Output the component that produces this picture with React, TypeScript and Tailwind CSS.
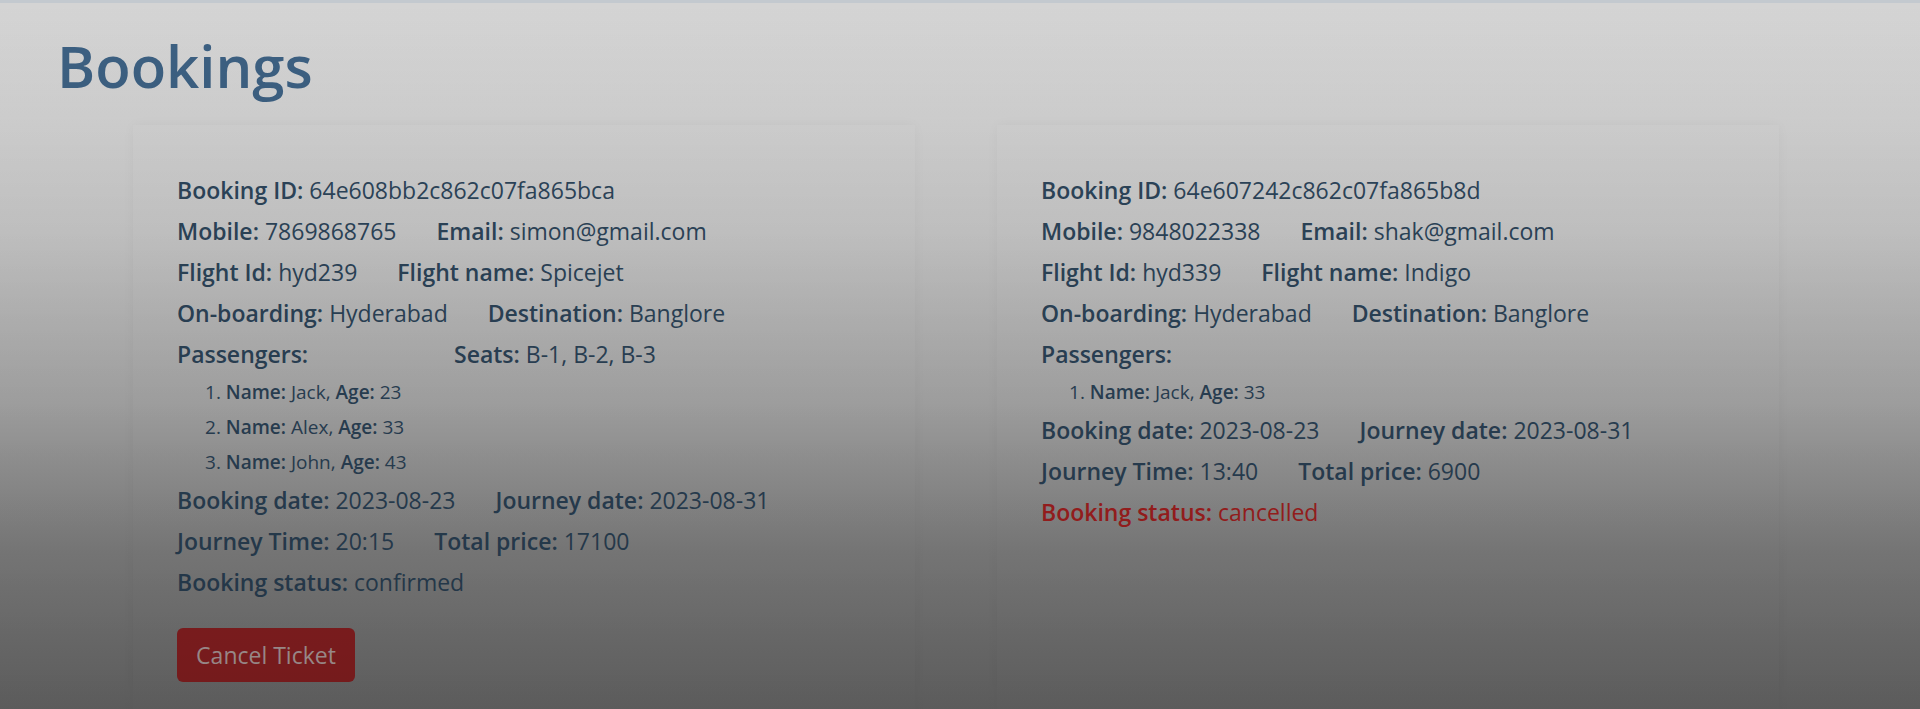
import React from 'react';

type Passenger = { name: string; age: number };

type Booking = {
  id: string;
  mobile: string;
  email: string;
  flightId: string;
  flightName: string;
  from: string;
  to: string;
  seats?: string;
  passengers: Passenger[];
  bookingDate: string;
  journeyDate: string;
  journeyTime: string;
  price: number;
  status: 'confirmed' | 'cancelled';
};

const bookings: Booking[] = [
  {
    id: '64e608bb2c862c07fa865bca',
    mobile: '7869868765',
    email: 'simon@gmail.com',
    flightId: 'hyd239',
    flightName: 'Spicejet',
    from: 'Hyderabad',
    to: 'Banglore',
    seats: 'B-1, B-2, B-3',
    passengers: [
      { name: 'Jack', age: 23 },
      { name: 'Alex', age: 33 },
      { name: 'John', age: 43 },
    ],
    bookingDate: '2023-08-23',
    journeyDate: '2023-08-31',
    journeyTime: '20:15',
    price: 17100,
    status: 'confirmed',
  },
  {
    id: '64e607242c862c07fa865b8d',
    mobile: '9848022338',
    email: 'shak@gmail.com',
    flightId: 'hyd339',
    flightName: 'Indigo',
    from: 'Hyderabad',
    to: 'Banglore',
    passengers: [{ name: 'Jack', age: 33 }],
    bookingDate: '2023-08-23',
    journeyDate: '2023-08-31',
    journeyTime: '13:40',
    price: 6900,
    status: 'cancelled',
  },
];

const Field: React.FC<{ label: string; value: React.ReactNode }> = ({ label, value }) => (
  <span>
    <b className="font-semibold">{label}:</b> {value}
  </span>
);

const BookingCard: React.FC<{ b: Booking }> = ({ b }) => (
  <div className="w-[782px] shrink-0 pt-[45px] pl-[44px] pb-10 shadow-[0_0_12px_rgba(0,0,0,0.035)]">
    <div className="flex h-[41px] items-center">
      <Field label="Booking ID" value={b.id} />
    </div>
    <div className="flex h-[41px] items-center gap-10">
      <Field label="Mobile" value={b.mobile} />
      <Field label="Email" value={b.email} />
    </div>
    <div className="flex h-[41px] items-center gap-10">
      <Field label="Flight Id" value={b.flightId} />
      <Field label="Flight name" value={b.flightName} />
    </div>
    <div className="flex h-[41px] items-center gap-10">
      <Field label="On-boarding" value={b.from} />
      <Field label="Destination" value={b.to} />
    </div>
    <div className="flex h-[41px] items-center">
      <span className="w-[277px] shrink-0 font-semibold">Passengers:</span>
      {b.seats && <Field label="Seats" value={b.seats} />}
    </div>
    <ol className="pl-[28px] text-[19px]">
      {b.passengers.map((p, i) => (
        <li key={i} className="flex h-[35px] items-center">
          {i + 1}.&nbsp;<b className="font-semibold">Name:</b>&nbsp;{p.name},&nbsp;
          <b className="font-semibold">Age:</b>&nbsp;{p.age}
        </li>
      ))}
    </ol>
    <div className="flex h-[41px] items-center gap-10">
      <Field label="Booking date" value={b.bookingDate} />
      <Field label="Journey date" value={b.journeyDate} />
    </div>
    <div className="flex h-[41px] items-center gap-10">
      <Field label="Journey Time" value={b.journeyTime} />
      <Field label="Total price" value={b.price} />
    </div>
    <div className={`flex h-[41px] items-center ${b.status === 'cancelled' ? 'text-[#b52323]' : ''}`}>
      <Field label="Booking status" value={b.status} />
    </div>
    {b.status === 'confirmed' && (
      <button className="mt-[25px] flex h-[54px] w-[178px] items-center justify-center rounded-[6px] bg-[#9e2426] text-[#c9b3b3]">
        Cancel Ticket
      </button>
    )}
  </div>
);

export default function App() {
  return (
    <div
      className="relative h-[709px] overflow-hidden border-t-[3px] border-[#c3c9cf] bg-[linear-gradient(to_bottom,#d4d4d4_0px,#d5d5d5_120px,#d0d0d0_230px,#b9b9b9_400px,#939393_550px,#7d7d7d_709px)] text-[23px] text-[#2e475d]"
      style={{ fontFamily: '"Open Sans", "Noto Sans", sans-serif' }}
    >
      <h1 className="mt-[28px] ml-[57px] text-[58px] leading-[70px] font-semibold text-[#3d6183]">Bookings</h1>
      <div className="mt-[24px] flex gap-[82px] pl-[133px]">
        {bookings.map(b => (
          <BookingCard key={b.id} b={b} />
        ))}
      </div>
      <div className="pointer-events-none absolute inset-0 bg-[linear-gradient(to_bottom,rgba(0,0,0,0)_0%,rgba(0,0,0,0.27)_100%)]" />
    </div>
  );
}
